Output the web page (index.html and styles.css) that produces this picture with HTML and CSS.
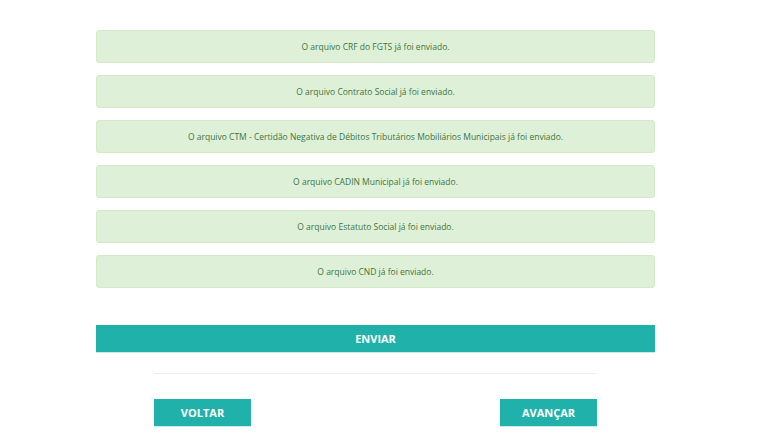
FILE: index.html
```html
<!DOCTYPE html>
<html lang="pt-BR">
<head>
<meta charset="utf-8">
<title>Envio de arquivos</title>
<link rel="stylesheet" href="styles.css">
</head>
<body>
<div class="page">
  <div class="col">
    <div class="alert">O arquivo CRF do FGTS já foi enviado.</div>
    <div class="alert">O arquivo Contrato Social já foi enviado.</div>
    <div class="alert">O arquivo CTM - Certidão Negativa de Débitos Tributários Mobiliários Municipais já foi enviado.</div>
    <div class="alert">O arquivo CADIN Municipal já foi enviado.</div>
    <div class="alert">O arquivo Estatuto Social já foi enviado.</div>
    <div class="alert">O arquivo CND já foi enviado.</div>
    <button class="btn btn-block">ENVIAR</button>
    <div class="nav">
      <hr class="sep">
      <div class="nav-buttons">
        <button class="btn btn-nav">VOLTAR</button>
        <button class="btn btn-nav">AVANÇAR</button>
      </div>
    </div>
  </div>
</div>
</body>
</html>
```

FILE: styles.css
```css
html, body {
  margin: 0;
  padding: 0;
  background: #ffffff;
}
body {
  font-family: "Open Sans", "Liberation Sans", sans-serif;
  width: 768px;
  height: 433px;
  overflow: hidden;
}
.page {
  padding: 30px 0 0 96px;
}
.col {
  width: 559px;
  display: flex;
  flex-direction: column;
}
.alert {
  box-sizing: border-box;
  height: 33px;
  margin-bottom: 12px;
  background: #dff0d8;
  border: 1px solid #d6e9c6;
  border-radius: 3px;
  color: #3c763d;
  font-size: 8.5px;
  display: flex;
  align-items: center;
  justify-content: center;
}
.btn {
  border: none;
  background: #20b2aa;
  color: #ffffff;
  font-family: "Open Sans", "Liberation Sans", sans-serif;
  font-weight: 700;
  font-size: 11px;
  padding: 0;
  margin: 0;
  box-shadow: 0 1px 0 #c9ece9;
  display: flex;
  align-items: center;
  justify-content: center;
}
.btn-block {
  margin-top: 25px;
  height: 27px;
  width: 100%;
}
.nav {
  padding: 0 58px;
}
.sep {
  margin: 21px 0 0;
  border: none;
  border-top: 1px solid #eeeeee;
  height: 0;
}
.nav-buttons {
  margin-top: 25px;
  display: flex;
  justify-content: space-between;
}
.btn-nav {
  width: 97px;
  height: 27px;
}
```
